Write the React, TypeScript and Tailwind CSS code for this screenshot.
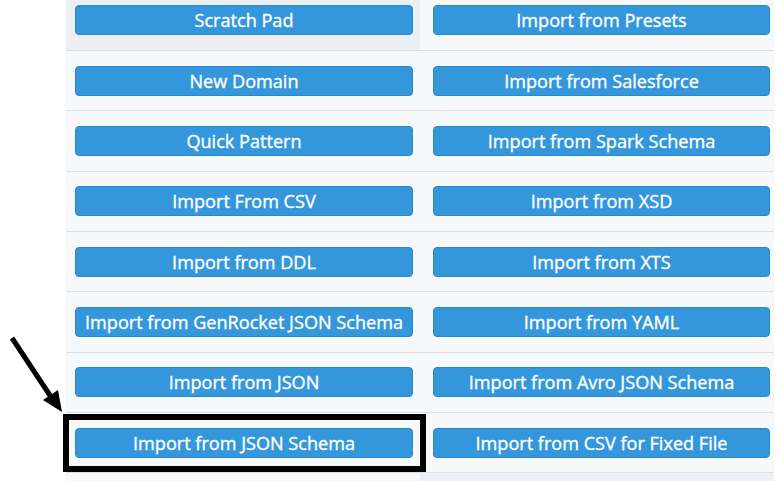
import React from "react";

const rows: [string, string][] = [
  ["Scratch Pad", "Import from Presets"],
  ["New Domain", "Import from Salesforce"],
  ["Quick Pattern", "Import from Spark Schema"],
  ["Import From CSV", "Import from XSD"],
  ["Import from DDL", "Import from XTS"],
  ["Import from GenRocket JSON Schema", "Import from YAML"],
  ["Import from JSON", "Import from Avro JSON Schema"],
  ["Import from JSON Schema", "Import from CSV for Fixed File"],
  ["", ""],
];

function Btn({ label }: { label: string }) {
  return (
    <button className="w-full h-[30px] rounded-[4px] bg-[#3597db] border border-[#2d88c9] text-white text-[18.1px] font-normal leading-none [-webkit-text-stroke:0.35px_white] flex items-center justify-center whitespace-nowrap [font-family:'Open_Sans',sans-serif]">
      {label}
    </button>
  );
}

export default function App() {
  return (
    <div className="relative w-[777px] h-[481px] overflow-hidden bg-white [font-family:'Open_Sans',sans-serif]">
      <div className="ml-[66px] w-[708px] -mt-[9.33px] bg-[#f7f8fa]">
        {rows.map(([a, b], i) => (
          <div
            key={i}
            className="grid grid-cols-[354px_354px] h-[60.33px] border-b border-[#dcdfe3]"
          >
            <div
              className={`flex items-center pl-[9px] pr-[7px] ${
                i === 0 ? "bg-[#eceff4]" : "bg-[#f7f8fa]"
              }`}
            >
              {a && <Btn label={a} />}
            </div>
            <div
              className={`flex items-center pl-[13px] pr-[4px] ${
                i === 8 ? "bg-[#eceff4]" : "bg-[#f7f8fa]"
              }`}
            >
              {b && <Btn label={b} />}
            </div>
          </div>
        ))}
      </div>

      {/* highlight box */}
      <div className="absolute left-[63px] top-[414px] w-[363px] h-[58px] border-[6px] border-black pointer-events-none" />

      {/* arrow */}
      <svg
        className="absolute left-0 top-[330px] pointer-events-none"
        width="80"
        height="90"
        viewBox="0 0 80 90"
      >
        <line x1="12" y1="8" x2="53" y2="70" stroke="black" strokeWidth="5" />
        <polygon points="62,82 43,70 58,60" fill="black" />
      </svg>
    </div>
  );
}
